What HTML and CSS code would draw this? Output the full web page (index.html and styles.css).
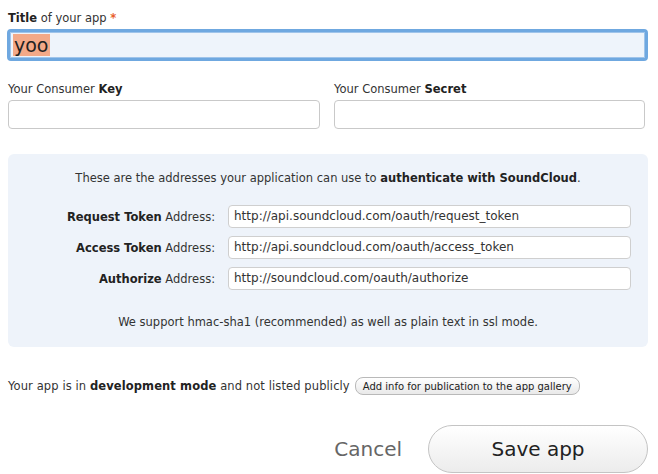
FILE: index.html
```html
<!DOCTYPE html>
<html>
<head>
<meta charset="utf-8">
<link rel="stylesheet" href="styles.css">
</head>
<body>
<div class="page">
  <div class="field">
    <label class="label"><b>Title</b> of your app <span class="req">*</span></label>
    <div class="title-input"><span class="sel">yoo</span></div>
  </div>

  <div class="keys">
    <div class="key">
      <label class="label">Your Consumer <b>Key</b></label>
      <div class="key-input"></div>
    </div>
    <div class="key">
      <label class="label">Your Consumer <b>Secret</b></label>
      <div class="key-input"></div>
    </div>
  </div>

  <div class="auth">
    <p class="auth-head">These are the addresses your application can use to <b>authenticate with SoundCloud</b>.</p>
    <div class="rows">
      <div class="row-label"><b>Request Token</b> Address:</div>
      <div class="url">http://api.soundcloud.com/oauth/request_token</div>
      <div class="row-label"><b>Access Token</b> Address:</div>
      <div class="url">http://api.soundcloud.com/oauth/access_token</div>
      <div class="row-label"><b>Authorize</b> Address:</div>
      <div class="url">http://soundcloud.com/oauth/authorize</div>
    </div>
    <p class="auth-foot">We support hmac-sha1 (recommended) as well as plain text in ssl mode.</p>
  </div>

  <div class="status">
    <span class="status-text">Your app is in <b>development mode</b> and not listed publicly</span>
    <button class="small-btn">Add info for publication to the app gallery</button>
  </div>

  <div class="actions">
    <a class="cancel">Cancel</a>
    <button class="save">Save app</button>
  </div>
</div>
</body>
</html>
```

FILE: styles.css
```css
* { box-sizing: border-box; }
html, body { margin: 0; padding: 0; background: #fff; }
body {
  font-family: "DejaVu Sans", "Lucida Grande", sans-serif;
  font-size: 11.5px;
  color: #333;
}
b { font-weight: bold; color: #222; }
.page {
  width: 658px;
  padding: 10px 10px 0 8px;
}
.label { display: block; line-height: 16px; }
.req { color: #e8602c; font-weight: bold; }
.title-input {
  margin-top: 3px;
  height: 32px;
  margin-left: -1px;
  border: 3px solid #6fa8e0;
  border-radius: 4px;
  background: #eef4fb;
  padding: 2px 3px;
  font-size: 19px;
  line-height: 22px;
  color: #222;
  box-shadow: inset 0 0 0 1px #9fc4ea;
}
.sel { background: #f3a988; padding: 0 1px; }

.keys {
  display: grid;
  grid-template-columns: 312px 311px;
  column-gap: 14px;
  margin-top: 20px;
}
.key-input {
  margin-top: 3px;
  height: 29px;
  border: 1px solid #c9c9c9;
  border-radius: 4px;
  background: #fff;
}

.auth {
  margin-top: 25px;
  width: 640px;
  background: #eef3fa;
  border-radius: 6px;
  padding: 16px 16px 17px;
}
.auth .auth-head { margin: 0; text-align: center; line-height: 16px; }
.rows {
  margin-top: 19px;
  display: grid;
  grid-template-columns: 191px 403px;
  column-gap: 13px;
  row-gap: 8px;
  align-items: center;
}
.row-label { text-align: right; }
.url {
  height: 23px;
  border: 1px solid #cfcfcf;
  border-radius: 4px;
  background: #fff;
  padding: 0 5px;
  font-size: 12px;
  line-height: 21px;
}
.auth .auth-foot { margin: 24px 0 0; text-align: center; line-height: 16px; }

.status {
  margin-top: 30px;
  display: flex;
  align-items: center;
  gap: 5px;
}
.status-text { letter-spacing: 0.1px; }
.small-btn {
  font-family: inherit;
  font-size: 10px;
  color: #222;
  height: 18px;
  padding: 0 7px;
  border: 1px solid #b9b9b9;
  border-radius: 8px;
  background: linear-gradient(#ffffff, #e9e9e9);
}

.actions {
  margin-top: 30px;
  display: flex;
  justify-content: flex-end;
  align-items: center;
  gap: 26px;
}
.cancel {
  font-size: 20px;
  color: #666;
}
.save {
  width: 220px;
  height: 48px;
  font-family: inherit;
  font-size: 20px;
  color: #222;
  border: 1px solid #c4c4c4;
  border-radius: 24px;
  background: linear-gradient(#ffffff, #ececec);
}
```
